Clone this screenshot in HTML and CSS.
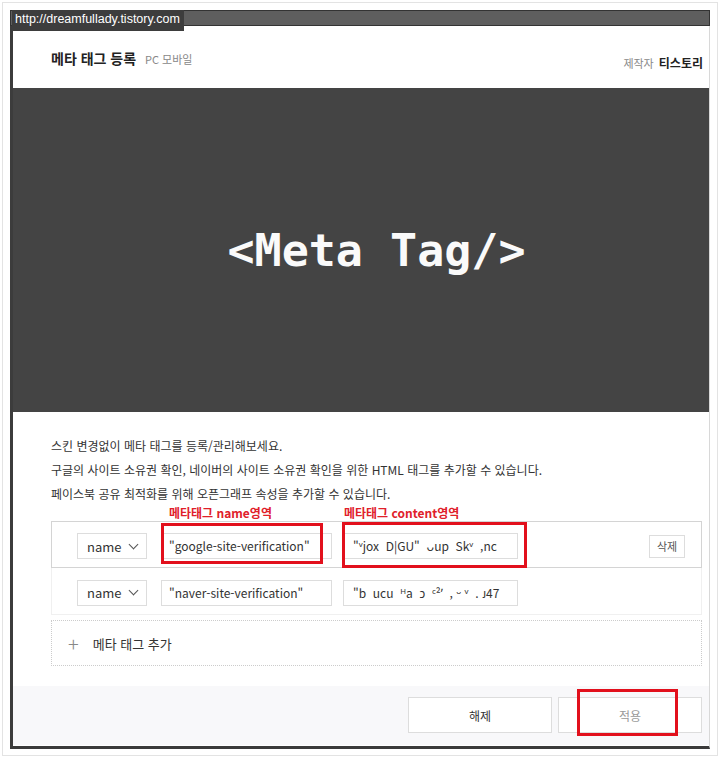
FILE: index.html
```html
<!DOCTYPE html>
<html lang="ko">

<head>
    <meta charset="UTF-8">
    <meta name="viewport" content="width=device-width, initial-scale=1.0">
    <title>메타 태그 등록</title>
    <link rel="stylesheet" href="styles.css">
</head>

<body>
    <div class="shot">
        <div class="window">
            <div class="topbar"></div>
            <span class="url">http://dreamfullady.tistory.com</span>

            <div class="head">
                <h1 class="title">메타 태그 등록 <span class="sub">PC 모바일</span></h1>
                <p class="maker">제작자 <b>티스토리</b></p>
            </div>

            <div class="cover">
                <p>&lt;Meta Tag/&gt;</p>
            </div>

            <div class="desc">
                <p>스킨 변경없이 메타 태그를 등록/관리해보세요.</p>
                <p>구글의 사이트 소유권 확인, 네이버의 사이트 소유권 확인을 위한 HTML 태그를 추가할 수 있습니다.</p>
                <p>페이스북 공유 최적화를 위해 오픈그래프 속성을 추가할 수 있습니다.</p>
            </div>

            <div class="notes">
                <span class="note note-name">메타태그 name영역</span>
                <span class="note">메타태그 content영역</span>
            </div>

            <div class="tags">
                <div class="row row-active">
                    <div class="select">name <span class="caret"></span></div>
                    <div class="field name">"google-site-verification"</div>
                    <div class="field content">"ᵛjox&nbsp; D|GU" &nbsp;ᴗup&nbsp; Skᵛ&nbsp; ,nc</div>
                    <button class="del">삭제</button>
                    <span class="mark mark-name"></span>
                    <span class="mark mark-content"></span>
                </div>
                <div class="row">
                    <div class="select">name <span class="caret"></span></div>
                    <div class="field name">"naver-site-verification"</div>
                    <div class="field content">"b&nbsp; ucu&nbsp; ᴴa&nbsp; ɔ &nbsp;ᶜ²ʼ&nbsp; , ᵕ ᵛ&nbsp; . ᴊ47</div>
                </div>
                <div class="add">
                    <span class="plus">+</span>
                    <span>메타 태그 추가</span>
                </div>
            </div>

            <div class="foot">
                <button class="btn">해제</button>
                <button class="btn btn-apply">적용<span class="mark mark-apply"></span></button>
            </div>
        </div>
    </div>
</body>

</html>
```

FILE: styles.css
```css
* {
    box-sizing: border-box;
}

body {
    margin: 0px;
    padding: 2px;
    background: #fff;
    font-family: "Noto Sans CJK KR", "Noto Sans", sans-serif;
    color: #333;
}

.shot {
    height: 754px;
    border: 1px solid #e3e3e3;
    padding: 7px 7px 0px 7px;
}

.window {
    position: relative;
    width: 700px;
    height: 739px;
    border-left: 3px solid #3c3c3c;
    border-right: 1px solid #d8d8d8;
    border-bottom: 3px solid #3a3a3a;
    background: #fff;
}

.topbar {
    height: 16px;
    margin-left: -3px;
    margin-right: -1px;
    background: #5e5e5e;
    border: 1px solid #333;
}

.url {
    position: absolute;
    top: 0px;
    left: -1px;
    width: 172px;
    height: 21px;
    padding-left: 3px;
    background: #3d3d3d;
    color: #fff;
    font-family: "Liberation Sans", sans-serif;
    font-size: 12.5px;
    line-height: 19px;
}

.head {
    display: flex;
    justify-content: space-between;
    align-items: flex-end;
    height: 62px;
    padding: 0px 6px 16px 38px;
}

.title {
    margin: 0px;
    font-size: 14px;
    font-weight: bold;
    color: #222;
    line-height: 20px;
    margin-bottom: 3px;
}

.sub {
    margin-left: 5px;
    font-size: 11px;
    font-weight: normal;
    color: #888;
}

.maker {
    margin: 0px;
    font-size: 11px;
    color: #888;
    line-height: 18px;
}

.maker b {
    margin-left: 2px;
    font-size: 12px;
    color: #222;
}

.cover {
    height: 324px;
    background: #444;
    display: flex;
    align-items: center;
    justify-content: center;
}

.cover p {
    margin: 0px;
    margin-left: 31px;
    font-family: "DejaVu Sans Mono", monospace;
    font-weight: bold;
    font-size: 45px;
    color: #fafafa;
}

.desc {
    padding: 22px 0px 0px 38px;
}

.desc p {
    margin: 0px;
    font-size: 12px;
    line-height: 24px;
    color: #333;
}

.notes {
    display: flex;
    padding-left: 156px;
    height: 15px;
}

.note {
    font-size: 12px;
    font-weight: bold;
    color: #e0202a;
    line-height: 14px;
}

.note-name {
    width: 175px;
}

.tags {
    margin: 0px 7px 0px 38px;
}

.row {
    position: relative;
    display: flex;
    align-items: center;
    height: 47px;
    padding-top: 3px;
    padding-left: 25px;
    border: 1px solid #f0f0f0;
    border-top: none;
}

.row-active {
    border: 1px solid #d4d4d4;
}

.select {
    display: flex;
    align-items: center;
    justify-content: space-between;
    width: 70px;
    height: 26px;
    padding: 0px 9px;
    border: 1px solid #ddd;
    font-size: 13px;
    color: #333;
}

.caret {
    width: 7px;
    height: 7px;
    margin-top: -4px;
    border-right: 1px solid #555;
    border-bottom: 1px solid #555;
    transform: rotate(45deg);
}

.field {
    height: 26px;
    margin-left: 14px;
    padding: 0px 7px;
    border: 1px solid #ddd;
    font-size: 12px;
    line-height: 24px;
    color: #333;
    white-space: nowrap;
    overflow: hidden;
}

.field.name {
    width: 171px;
}

.field.content {
    width: 175px;
    margin-left: 11px;
    padding-left: 9px;
}

.del {
    margin-left: auto;
    margin-right: 16px;
    width: 36px;
    height: 23px;
    padding: 0px;
    border: 1px solid #ddd;
    background: #fff;
    font-family: inherit;
    font-size: 11px;
    color: #555;
}

.mark {
    position: absolute;
    border: 3px solid #e2101c;
}

.mark-name {
    left: 109px;
    top: 1px;
    width: 162px;
    height: 41px;
}

.mark-content {
    left: 290px;
    top: 0px;
    width: 185px;
    height: 46px;
}

.add {
    display: flex;
    align-items: center;
    height: 46px;
    margin-top: 5px;
    padding-left: 16px;
    border: 1px dotted #ccc;
    font-size: 13px;
    color: #333;
}

.plus {
    margin-right: 14px;
    font-size: 20px;
    font-weight: 300;
    color: #888;
}

.foot {
    display: flex;
    justify-content: flex-end;
    gap: 6px;
    height: 59px;
    margin-top: 20px;
    padding: 11px 7px 0px 0px;
    background: #f8f8fa;
}

.btn {
    position: relative;
    width: 144px;
    height: 36px;
    border: 1px solid #ddd;
    background: #fff;
    font-family: inherit;
    font-size: 12px;
    color: #333;
}

.btn-apply {
    color: #999;
}

.mark-apply {
    left: 18px;
    top: -9px;
    width: 101px;
    height: 47px;
}
```
